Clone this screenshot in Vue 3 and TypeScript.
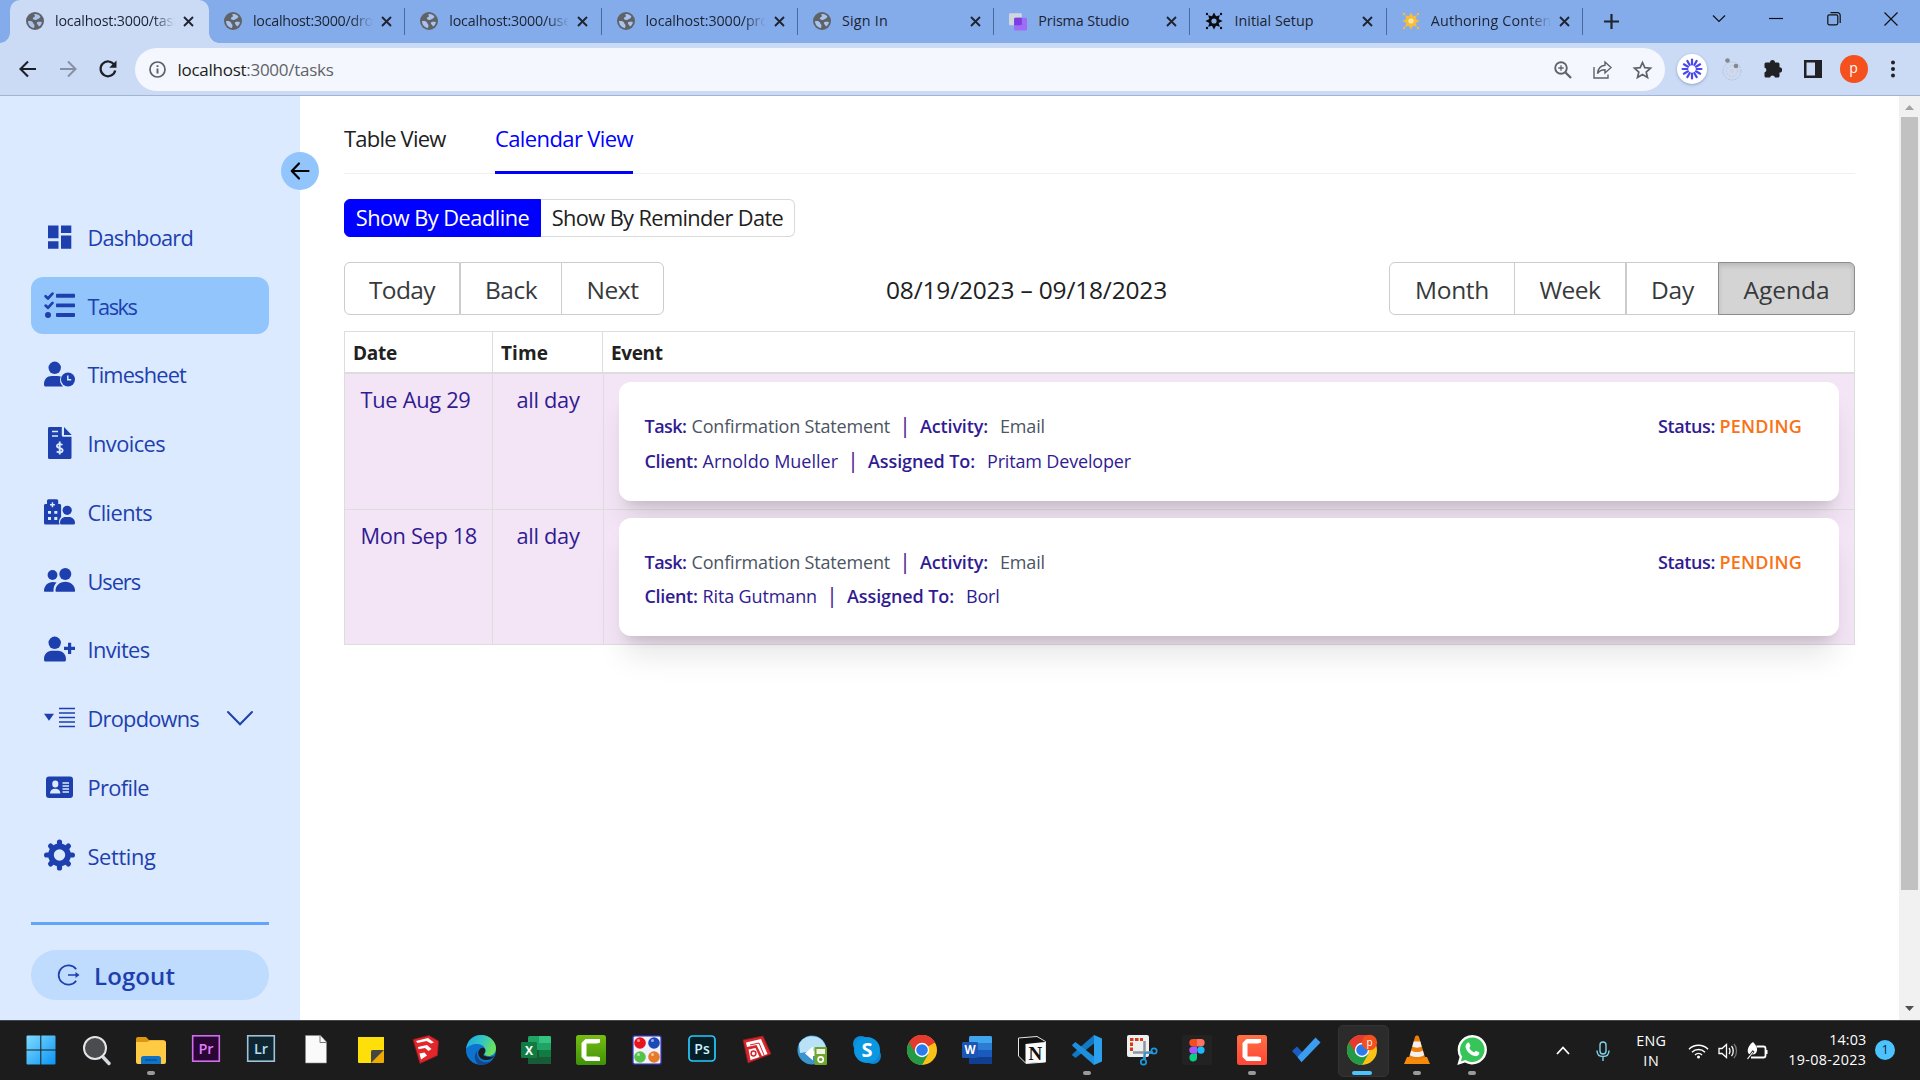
<script setup lang="ts">
// Stretches or tightens a label's tracking so that it occupies a set width.
const vFit = {
  mounted(el: HTMLElement, binding: { value: number }) {
    const count = (el.textContent ?? '').trim().length
    if (!binding.value || !count) return
    const natural = el.getBoundingClientRect().width
    el.style.letterSpacing = `${((binding.value - natural) / count).toFixed(3)}px`
  },
}

interface BrowserTab { title: string; icon: string; w: number; active?: boolean; fade?: boolean; line?: boolean }
const globe = '<svg viewBox="0 0 18 18" width="18" height="18"><circle cx="9" cy="9" r="9" fill="#5f6368"/><path d="M2 9c2.500-.3 5 .2 5.200 2 .1 1.300 1.400 1.200 1.300 2.600-.1 1-.2 1.700-.5 2.400C4.500 15.500 2 12.600 2 9zM8.300 2.100c3.500-.3 5.400 1.300 6.200 2.800-1.200.4-.8 1.700-2 1.900-1.500.3-1.300 1-2.700 1.100C8.200 8 6.500 7.300 6.900 6c.3-1.100 1.900-.7 2-1.800C9 3.300 8.300 3 8.300 2.100zM11 10.500c1-.9 2.800-.6 4.900-.6-.3 1.900-1.400 3.700-2.900 4.700-.3-1.500-2.800-2.700-2-4.100z" fill="#a9c3ee"/></svg>'
const spark = (c: string, d: string) => `<svg viewBox="0 0 20 20" width="20" height="20"><path d="M10 .5l2.300 4.300 4.200-1.300L15.200 7.700 19.500 10l-4.300 2.300 1.300 4.200-4.200-1.300L10 19.500l-2.300-4.300-4.200 1.300 1.300-4.200L.5 10l4.300-2.300L3.500 3.500l4.200 1.300z" fill="${c}"/><circle cx="10" cy="10" r="2.900" fill="${d}"/><g fill="${c}"><circle cx="2.200" cy="2.200" r="1.300"/><circle cx="17.800" cy="2.200" r="1.300"/><circle cx="2.200" cy="17.800" r="1.300"/><circle cx="17.800" cy="17.800" r="1.300"/></g></svg>`
const prisma = '<svg viewBox="0 0 21 21" width="21" height="21"><rect x="0" y="1" width="15" height="14" rx="1.500" fill="#cfd6df"/><rect x="6" y="6" width="15" height="15" rx="1.500" fill="#9f6cf7"/><path d="M6 7.500A1.500 1.500 0 0 1 7.500 6H15v7.500a1.500 1.500 0 0 1-1.500 1.500H6z" fill="#7a3fe0"/></svg>'

const browserTabs: BrowserTab[] = [
  { title: 'localhost:3000/tasks', icon: globe, w: 132, active: true, fade: true },
  { title: 'localhost:3000/dropdowns', icon: globe, w: 171, fade: true, line: true },
  { title: 'localhost:3000/users', icon: globe, w: 134, fade: true, line: true },
  { title: 'localhost:3000/profile', icon: globe, w: 143, fade: true, line: true },
  { title: 'Sign In', icon: globe, w: 46, line: true },
  { title: 'Prisma Studio', icon: prisma, w: 91, line: true },
  { title: 'Initial Setup', icon: spark('#0b0b10', '#85acea'), w: 79, line: true },
  { title: 'Authoring Content', icon: spark('#f6bd3b', '#fbe6a8'), w: 126, fade: true, line: true },
]

const N = '#1e40af'
const nav = [
  { label: 'Dashboard', w: 105.5, icon: '<path d="M4 4.500h10.500v12.700H4zM17 4.500h10.300V12H17zM4 20.200h10.500v7.600H4zM17 14.500h10.300v13.300H17z"/>' },
  { label: 'Tasks', w: 49, active: true, icon: `<g fill="none" stroke="${N}" stroke-width="2.700" stroke-linecap="round" stroke-linejoin="round"><path d="M1.600 7.300l2.300 2.200L8.500 4.600M1.600 16.600l2.300 2.200 4.600-4.900"/></g><circle cx="4" cy="26" r="3"/><rect x="12" y="4.800" width="19" height="3.900" rx=".8"/><rect x="12" y="14.400" width="19" height="3.900" rx=".8"/><rect x="12" y="24" width="19" height="3.900" rx=".8"/>` },
  { label: 'Timesheet', w: 98.5, icon: '<circle cx="10.700" cy="9.800" r="6.200"/><path d="M0 26.200C0 21.500 3 18 7.800 18h5.800c1.200 0 2.200.2 3.200.6a8.800 8.800 0 0 0 2.200 9.900H1.500C.6 28.500 0 27.600 0 26.200z"/><circle cx="24" cy="21.500" r="7"/><path d="M23.800 17.500v4.300h3.400" fill="none" stroke="#dbeafe" stroke-width="1.500"/>' },
  { label: 'Invoices', w: 77.5, icon: '<path d="M5.300 0h12.500v8.300c0 .9.500 1.500 1.400 1.500h8.300v20.700c0 .9-.6 1.500-1.500 1.500H5.400c-.9 0-1.400-.6-1.400-1.500V1.500C4 .6 4.500 0 5.300 0zM20 0l7.700 7.900H20z"/><path d="M8 4.500h6M8 9h6" stroke="#dbeafe" stroke-width="1.700"/><path d="M18.500 17.800c-2.800-1.300-5.600-.9-5.600 1.200 0 2.600 5.800 1.500 5.800 4.300 0 2.200-3.200 2.700-6 1.200M15.700 14.500v13" fill="none" stroke="#dbeafe" stroke-width="1.800"/>' },
  { label: 'Clients', w: 64.5, icon: '<path d="M1.500 8H3V5c0-1 .6-1.700 1.600-1.700h8c1 0 1.600.7 1.600 1.700v3h1.500c.8 0 1.400.6 1.400 1.400V21c-1.300 1.300-2 3-2.100 4.500 0 1 .2 2 .8 2.900H1.500A1.500 1.500 0 0 1 0 26.900V9.500C0 8.600.6 8 1.500 8z"/><path d="M4 15h3v2.800H4zM10.300 15h3v2.800h-3zM4 21h3v3H4zM10.300 21h3v3h-3zM7.700 6.300h1.500v1.700h1.700v1.500H9.200v1.700H7.700V9.500H6V8h1.700z" fill="#dbeafe"/><circle cx="23.200" cy="14.300" r="4.600"/><path d="M16 27c0-3.500 2.300-6 5.500-6H25c3.200 0 6 2.500 6 6 0 .9-.5 1.400-1.200 1.400H17.200C16.500 28.400 16 27.900 16 27z"/>' },
  { label: 'Users', w: 52.5, icon: '<circle cx="8.500" cy="11" r="4.900"/><circle cx="21.300" cy="10" r="6"/><path d="M11.500 26.800c0-5 4-9 9.800-9s9.800 4 9.800 9c0 .6-.4 1-1 1H12.500c-.6 0-1-.4-1-1zM0 26.800c0-5 3.700-8.900 9-8.900 1.300 0 2.500.2 3.600.7-2.300 2-3.300 5-3.100 9.200H1c-.6 0-1-.4-1-1z"/>' },
  { label: 'Invites', w: 62, icon: '<circle cx="10.700" cy="9.800" r="6.200"/><path d="M0 26.200C0 21.500 3 17.800 7.800 17.800h6.400c4.500 0 7.800 3.700 7.800 8.400 0 1.400-.7 2.300-1.600 2.300h-19C.6 28.500 0 27.600 0 26.200zM24 9.800h3.200v4H31v3.100h-3.800v4.200H24v-4.200h-4v-3.100h4z"/>' },
  { label: 'Dropdowns', w: 111.5, chevron: true, icon: `<path d="M0 11.700h10L5 18.700z"/><path d="M15 6.500h16M15 11h16M15 15.500h16M15 20h16M15 24.500h16" stroke="${N}" stroke-width="1.500"/>` },
  { label: 'Profile', w: 61.5, icon: '<rect x="2" y="5.500" width="27" height="21.600" rx="3"/><g fill="#dbeafe"><rect x="8.300" y="9.500" width="6" height="7" rx="2.900"/><path d="M6 22.500c0-3 2-4.800 5.200-4.800s5.200 1.800 5.200 4.800z"/></g><path d="M18.500 12H25M18.500 15h6.500M18.500 18H25M18.500 21H25" stroke="#dbeafe" stroke-width="1.400"/>' },
  { label: 'Setting', w: 68, icon: `<g stroke="${N}" stroke-width="5.200" stroke-linecap="round"><path d="M15.500 3.100v25.800M2.600 16h25.800M6.600 7.100l17.800 17.800M24.400 7.100L6.600 24.900"/></g><circle cx="15.500" cy="16" r="11.400"/><circle cx="15.500" cy="16" r="5.700" fill="#dbeafe"/>` },
]

const nudge = [
  { label: 'Today', w: 66 },
  { label: 'Back', w: 52 },
  { label: 'Next', w: 52 },
]
const views = [
  { label: 'Month', w: 74 },
  { label: 'Week', w: 61 },
  { label: 'Day', w: 43 },
  { label: 'Agenda', w: 86, active: true },
]

const rows = [
  { date: 'Tue Aug 29', dw: 110, client: 'Arnoldo Mueller', cw: 135.5, user: 'Pritam Developer', uw: 144 },
  { date: 'Mon Sep 18', dw: 116.5, client: 'Rita Gutmann', cw: 114.5, user: 'Borl', uw: 33.5 },
]

const chrome = '<circle cx="15" cy="15" r="15" fill="#fbc116"/><path d="M15 15L2 7.500A15 15 0 0 1 28 7.500z" fill="#e33b2e"/><path d="M2 7.500A15 15 0 0 0 15 30l6.500-11.200L15 15z" fill="#229a46"/><path d="M15 8h13.200A15 15 0 0 0 2 7.500L8.700 18z" fill="#e33b2e"/><circle cx="15" cy="15" r="7.200" fill="#fff"/><circle cx="15" cy="15" r="5.800" fill="#2a7bee"/>'
const letter = (t: string, x: number, y: number, s: number, c: string, w = 600) =>
  `<text x="${x}" y="${y}" font-family="Open Sans, Noto Sans, sans-serif" font-size="${s}" font-weight="${w}" fill="${c}" text-anchor="middle">${t}</text>`
const camtasia = (a: string, b: string, id: string) =>
  `<defs><linearGradient id="${id}" x1="0" y1="0" x2="0" y2="1"><stop stop-color="${a}"/><stop offset="1" stop-color="${b}"/></linearGradient></defs><rect width="30" height="30" rx="2.500" fill="url(#${id})"/><path d="M24 4v3.500l-3 1H10.500v13H21l3 1V26H9.500L5.500 22V8l4-4z" fill="#fff"/>`

const apps: { name: string; art: string; run?: boolean; active?: boolean }[] = [
  { name: 'start', art: '<defs><linearGradient id="w" x1="0" y1="0" x2="1" y2="1"><stop stop-color="#7fdcff"/><stop offset="1" stop-color="#0a94f4"/></linearGradient></defs><path d="M.5 1.500A1 1 0 0 1 1.500.5h12.800v14H.5zM15.300.5h13.200a1 1 0 0 1 1 1v13H15.300zM.5 15.500h13.800v14H1.500a1 1 0 0 1-1-1zM15.300 15.500h14.200v13a1 1 0 0 1-1 1H15.300z" fill="url(#w)"/>' },
  { name: 'search', art: '<path d="M21.500 21.500l6.500 7" stroke="#d5d8dc" stroke-width="3.400" stroke-linecap="round"/><circle cx="14" cy="13" r="11" fill="#4a4c4f" stroke="#e3e6e9" stroke-width="2"/>' },
  { name: 'files', run: true, art: '<path d="M0 4a2 2 0 0 1 2-2h8l3 3h14a2 2 0 0 1 2 2v5H0z" fill="#dc9710"/><path d="M0 7h11l3-1.500h14a2 2 0 0 1 2 2V27a2 2 0 0 1-2 2H2a2 2 0 0 1-2-2z" fill="#ffcb45"/><path d="M5 29v-5.500a2.500 2.500 0 0 1 2.500-2.500h15a2.500 2.500 0 0 1 2.500 2.500V29z" fill="#1173c7"/><path d="M9 25h12" stroke="#0a4a8a" stroke-width="1.200"/>' },
  { name: 'premiere', art: '<rect x="1.700" y=".8" width="26.600" height="25.400" fill="#2a0634" stroke="#d36cf0" stroke-width="1.600"/>' + letter('Pr', 15, 18.5, 14.5, '#e07bff') },
  { name: 'lightroom', art: '<rect x="1.700" y=".8" width="26.600" height="25.400" fill="#0f2631" stroke="#9fc4d8" stroke-width="1.600"/>' + letter('Lr', 15, 18.5, 14.5, '#b4dcf2') },
  { name: 'document', art: '<path d="M4.500.5h15l6 6.500V28h-21z" fill="#fafafa" stroke="#8c8c8c" stroke-width=".6"/><path d="M19 .8V7.500h6.300" fill="none" stroke="#777" stroke-width="1"/>' },
  { name: 'notes', art: '<path d="M2 2h26v14L18 28H3a1 1 0 0 1-1-1z" fill="#ffdf0a"/><path d="M15 28l13-13v12a1 1 0 0 1-1 1z" fill="#f0ab00"/><path d="M15 28V16.500a1.500 1.500 0 0 1 1.500-1.500H28z" fill="#454545"/>' },
  { name: 'sketchup', art: '<path d="M2 4.500L18 .5l9.500 5.500-1 14.500L9 28.500z" fill="#e3262b" stroke="#8d1b1f" stroke-width=".8"/><path d="M5 6l12-3 6 4.500-3 1-4.500-2.500-9 2zM7 12l9-2 4.500 4-3 2-3.500-3-6.500 1.200zM8.500 18.500l5-1 2.500 3-6 4z" fill="#fff"/>' },
  { name: 'edge', art: '<defs><linearGradient id="ed" x1="0" y1="0" x2="1" y2=".3"><stop stop-color="#1ba8e8"/><stop offset=".6" stop-color="#35c7c0"/><stop offset="1" stop-color="#6be05c"/></linearGradient></defs><circle cx="15" cy="15" r="15" fill="#0c73cf"/><path d="M.2 14C1 5.500 7.200 0 15 0c8.500 0 15 6.300 15 13 0 5.500-3.600 8-7.700 8-3.300 0-4.500-1.600-3.700-2.800.8-1 1.100-2.200.7-3.700C18.500 11.300 15.600 9 11 9 6.300 9 1.800 11 .2 14z" fill="url(#ed)"/><path d="M11.500 15.500c-2.500 7 3.500 12.500 9.500 11.700 2.400-.3 4.600-1 6-2.900A15 15 0 0 1 15 30C9 29.500 6.500 20 11.500 15.500z" fill="#14478f"/><path d="M18.700 21.100c-2-.6-1.200-2-.2-2.900.8-1 1.100-2.200.7-3.700-.7-2.300-4-2.200-5.800.2-3 4 .3 9.800 5.600 10.200 4 .3 7-1 9.700-3.900-3 1.300-6.500 1.200-10 .1z" fill="#1c1c1c"/>' },
  { name: 'excel', art: '<rect x="7" y="1" width="23" height="28" rx="1.500" fill="#21a366"/><path d="M18 1h10.500A1.500 1.500 0 0 1 30 2.500V8H18z" fill="#33c481"/><path d="M7 15h11v7H7z" fill="#185c37"/><path d="M18 15h12v7H18z" fill="#107c41"/><path d="M7 22h23v5.500a1.500 1.500 0 0 1-1.500 1.500h-20A1.500 1.500 0 0 1 7 27.500z" fill="#185c37"/><rect x="0" y="7" width="16" height="16" rx="1.300" fill="#107c41"/>' + letter('X', 8, 19.5, 12, '#fff', 700) },
  { name: 'camtasia', art: camtasia('#77bd12', '#3f9308', 'cg') },
  { name: 'beads', art: '<rect x=".8" y=".8" width="28.400" height="28.400" rx="2" fill="#f1f1fb" stroke="#2a2a9c" stroke-width="1.500"/><circle cx="8" cy="8" r="5.800" fill="#e8141c"/><circle cx="22" cy="8" r="5.800" fill="#1c49b8"/><circle cx="8" cy="22" r="5.800" fill="#55c34a"/><circle cx="22" cy="22" r="5.800" fill="#e77a28"/><g fill="#fff" opacity=".55"><circle cx="6.500" cy="5.500" r="1.500"/><circle cx="20.500" cy="5.500" r="1.500"/><circle cx="6.500" cy="19.500" r="1.500"/><circle cx="20.500" cy="19.500" r="1.500"/></g>' },
  { name: 'photoshop', art: '<rect x="2" y="1" width="26" height="25" rx="3.500" fill="#061e26" stroke="#26c9ff" stroke-width="1.700"/>' + letter('Ps', 15, 18.5, 14, '#c9f1ff') },
  { name: 'layout', art: '<path d="M1 5L21 1l8 18L6 28z" fill="#d7262c" stroke="#8a1a1d" stroke-width=".8"/><path d="M4 7.500L19 4l6.500 15L20 21l-5.500-11L5 12z" fill="#fff"/><path d="M6.500 14.500l7-1.500 4 9-9 3z" fill="#fff"/><circle cx="11.500" cy="18.500" r="2.400" fill="none" stroke="#d7262c" stroke-width="1.500"/><path d="M8 10l9-2 5 12" fill="none" stroke="#d7262c" stroke-width="1"/>' },
  { name: 'downloads', art: '<circle cx="15" cy="15" r="14.500" fill="#3a95cf"/><path d="M2 9C6 1 16-1 23 3.500c3 2 5.500 6 6 9.500L18 16 3 18z" fill="#b9e2f6"/><path d="M8 18.500l8-7V16h5v5h-5v4.500z" fill="#fff"/><rect x="17.500" y="12" width="12.500" height="18" rx="1" fill="#6fa62f"/><rect x="19.500" y="14" width="8.500" height="5" fill="#eef5e2"/><circle cx="23.700" cy="24.500" r="2.600" fill="none" stroke="#fff" stroke-width="1.700"/>' },
  { name: 'skype', art: '<circle cx="9" cy="9" r="8" fill="#0a8fd8"/><circle cx="21" cy="21" r="8" fill="#0a86d8"/><circle cx="15" cy="15" r="13" fill="#0c97e2"/>' + letter('S', 15, 22, 20, '#fff', 700) },
  { name: 'chrome', art: chrome },
  { name: 'word', art: '<rect x="7" y="1" width="23" height="28" rx="1.500" fill="#185abd"/><path d="M8.500 1h20A1.500 1.500 0 0 1 30 2.500V8H7V2.500A1.500 1.500 0 0 1 8.500 1z" fill="#41a5ee"/><path d="M7 8h23v7H7z" fill="#2b7cd3"/><path d="M7 22h23v5.500a1.500 1.500 0 0 1-1.500 1.500h-20A1.500 1.500 0 0 1 7 27.500z" fill="#103f91"/><rect x="0" y="7" width="16" height="16" rx="1.300" fill="#1b55b5"/>' + letter('W', 8, 19.2, 11.5, '#fff', 700) },
  { name: 'notion', art: '<path d="M1.500 3L20 1.500 28.500 6.500V27L9 28.500 1.500 21z" fill="#111" stroke="#e5e5e5" stroke-width="1"/><path d="M8.500 9L28 7v20L8.500 28.200z" fill="#fafafa"/>' + '<text x="18.300" y="24.500" font-family="Liberation Serif, serif" font-size="19" font-weight="700" fill="#111" text-anchor="middle">N</text>' },
  { name: 'vscode', run: true, art: '<path d="M22 0l8 3.500v23L22 30z" fill="#2ba0ee"/><path d="M22 8.500L3.500 23 .5 20.500a1 1 0 0 1 0-1.400L22 0z" fill="#1179c3"/><path d="M22 21.500L3.500 7 .5 9.500a1 1 0 0 0 0 1.400L22 30z" fill="#1f8fdd"/>' },
  { name: 'snip', art: '<rect x="0" y="0" width="22" height="22" rx="2" fill="#eeeff1"/><path d="M4.500 16V4.500H16" fill="none" stroke="#d63b12" stroke-width="3" stroke-dasharray="3.500 1.500"/><path d="M17.500 6v18M6 17.500h20" stroke="#8f959b" stroke-width="2.500"/><circle cx="27" cy="16" r="2.700" fill="none" stroke="#1b98e0" stroke-width="1.700"/><circle cx="16.500" cy="27" r="2.700" fill="none" stroke="#1b98e0" stroke-width="1.700"/><path d="M24.500 17.500L18 18l-1 6.500" fill="none" stroke="#1b98e0" stroke-width="1.700"/>' },
  { name: 'figma', art: '<rect width="30" height="30" rx="2" fill="#222"/><path d="M11 4h4v7.400h-4a3.700 3.700 0 0 1 0-7.400z" fill="#f24e1e"/><path d="M15 4h4a3.700 3.700 0 0 1 0 7.400h-4z" fill="#ff7262"/><path d="M11 11.400h4v7.400h-4a3.700 3.700 0 0 1 0-7.400z" fill="#a259ff"/><circle cx="18.900" cy="15.100" r="3.700" fill="#1abcfe"/><path d="M11 18.800h4v3.700a3.800 3.800 0 1 1-4-3.700z" fill="#0acf83"/>' },
  { name: 'recorder', run: true, art: camtasia('#ff7043', '#ff4536', 'cr') },
  { name: 'todo', art: '<path d="M0 16l5-4.500 8.500 9L9.500 26.500z" fill="#1a5dbe"/><path d="M9.500 27.200L5.500 22 23.500 2.500l5 5z" fill="#3b9df0"/>' },
  { name: 'chrome-profile', run: true, active: true, art: chrome + '<circle cx="22.500" cy="7.500" r="7.700" fill="#f4511e"/>' + letter('p', 22.5, 10.5, 10, '#fff', 400) },
  { name: 'player', run: true, art: '<path d="M5 22h20l3 7H2z" fill="#f58a0b"/><path d="M15 .5c1 0 1.800.5 2 1.500L23 22c-2 3.500-14 3.500-16 0L13 2c.2-1 1-1.500 2-1.500z" fill="#f07d0a"/><path d="M11.700 6.500h6.600l1.400 5c-2 1.500-7.300 1.500-9.400 0zM9.300 15.500c3 2 8.500 2 11.500 0l1.300 4.500c-3 2.700-11.200 2.700-14.200 0z" fill="#f1f1f1"/>' },
  { name: 'chat', run: true, art: '<path d="M15.300 0A14.700 14.700 0 1 1 8 27.500L.3 30l2.300-8A14.700 14.700 0 0 1 15.300 0z" fill="#fff"/><path d="M15.400 2.400A12.300 12.300 0 1 1 8.500 25l-4.800 1.500 1.500-4.800A12.300 12.300 0 0 1 15.400 2.400z" fill="#35c559"/><path d="M10.500 8c.7-.6 1.500-.5 1.900.3l1 2.400c.3.800-1.100 1.700-1 2.200.9 2 2.500 3.500 4.700 4.400.6.200 1.400-1.700 2.100-1.400l2.500 1.200c.8.400.7 1 .4 1.900-.6 1.600-2.600 2.500-4.500 2-4.600-1-8-4.500-9-8.700-.3-1.700.5-3.300 1.900-4.300z" fill="#fff"/>' },
]
</script>

<template>
  <div class="screen">
    <header class="browser">
      <div class="strip">
        <div v-for="t in browserTabs" :key="t.title" class="btab" :class="{ on: t.active, line: t.line }">
          <span class="fav" v-html="t.icon"></span>
          <span class="ttl" :class="{ fade: t.fade }"><span v-fit="t.w" class="tx">{{ t.title }}</span></span>
          <svg class="x" width="11" height="11" viewBox="0 0 11 11"><path d="M1 1l9 9M10 1l-9 9" stroke="#1f2430" stroke-width="1.900" /></svg>
        </div>
        <svg class="plus" width="15" height="15" viewBox="0 0 15 15"><path d="M7.500 0v15M0 7.500h15" stroke="#1f2430" stroke-width="2.200" /></svg>
        <div class="win">
          <svg viewBox="0 0 14 14"><path d="M1 3.500l6 6 6-6" /></svg>
          <svg viewBox="0 0 14 14"><path d="M0 6.500h14" /></svg>
          <svg viewBox="0 0 14 14"><rect x=".8" y="2.800" width="10" height="10" rx="1.500" /><path d="M3.500.7h7a2.700 2.700 0 0 1 2.700 2.700v7.500" /></svg>
          <svg viewBox="0 0 14 14"><path d="M.5.5l13 13M13.500.5l-13 13" /></svg>
        </div>
      </div>
      <div class="bar">
        <svg width="18" height="18" viewBox="0 0 18 18" class="i1"><path d="M17 9H2M9 1.500L1.500 9 9 16.500" fill="none" stroke="#1c1f24" stroke-width="2.100" /></svg>
        <svg width="18" height="18" viewBox="0 0 18 18" class="i2"><path d="M1 9h15M9 1.500L16.500 9 9 16.500" fill="none" stroke="#8790a0" stroke-width="2" /></svg>
        <svg width="18" height="18" viewBox="0 0 18 18" class="i3"><path d="M15.300 5A7.400 7.400 0 1 0 16.200 10.500" fill="none" stroke="#1c1f24" stroke-width="2.200" /><path d="M17.500.5v7.300h-7.300z" fill="#1c1f24" /></svg>
        <div class="omni">
          <svg width="17" height="17" viewBox="0 0 17 17"><circle cx="8.500" cy="8.500" r="7.500" fill="none" stroke="#5b6067" stroke-width="1.700" /><path d="M8.500 7.500v5M8.500 4.200v1.900" stroke="#5b6067" stroke-width="1.900" /></svg>
          <span v-fit="156" class="tx url"><b>localhost</b>:3000/tasks</span>
          <svg class="zoomer" width="18" height="18" viewBox="0 0 18 18" fill="none" stroke="#5f6368" stroke-width="1.900"><circle cx="7" cy="7" r="5.800" /><path d="M11.500 11.500L17 17" stroke-width="2.300" /><path d="M7 4.300v5.400M4.300 7h5.400" stroke-width="1.300" /></svg>
          <svg width="19" height="18" viewBox="0 0 19 18" fill="none" stroke="#5f6368" stroke-width="1.400"><path d="M1 6v11h14v-3.500" /><path d="M12 1l6 5.500-6 5.500V8.800c-3 0-5.500.8-7.500 3.700C5 8 7.500 4.700 12 4.300z" /></svg>
          <svg width="19" height="18" viewBox="0 0 19 18" fill="none" stroke="#5f6368" stroke-width="1.700"><path d="M9.500 1.500l2.300 5.200 5.700.5-4.300 3.800 1.300 5.500-5-2.900-5 2.900 1.300-5.500L1.500 7.200l5.700-.5z" /></svg>
        </div>
        <div class="ext">
          <span class="round"><svg width="22" height="22" viewBox="-11 -11 22 22"><g stroke="#4a48ec" stroke-width="2.200" stroke-linecap="round"><path v-for="k in 12" :key="k" d="M0 -4.600V-9.400" :transform="`rotate(${k * 30})`" /></g></svg></span>
          <svg class="e2" width="22" height="22" viewBox="0 0 22 22"><circle cx="11" cy="13" r="9" fill="none" stroke="#b9c0cb" stroke-dasharray="2 1.200" /><circle cx="11" cy="13" r="5.500" fill="none" stroke="#cdc6c8" stroke-dasharray="2 1.200" /><circle cx="11" cy="13" r="2" fill="#dccfc8" /><circle cx="6.500" cy="2.500" r="2.300" fill="#83878e" /><circle cx="15" cy="8" r="2.300" fill="#83878e" /></svg>
          <svg class="e3" width="20" height="20" viewBox="0 0 20 20"><path d="M7 3.500a2.500 2.500 0 0 1 5 0h3A1.500 1.500 0 0 1 16.500 5v3.300a2.600 2.600 0 0 1 0 5.200V17a1.500 1.500 0 0 1-1.500 1.500h-3a2.600 2.600 0 0 0-5 0H3A1.500 1.500 0 0 1 1.500 17v-3.500a2.600 2.600 0 0 0 0-5V5A1.500 1.500 0 0 1 3 3.500z" fill="#202124" /></svg>
          <svg class="e4" width="20" height="20" viewBox="0 0 20 20"><path d="M1 1h18v18H1zM3.500 3.500v13H12v-13z" fill="#202124" fill-rule="evenodd" /></svg>
          <span class="avatar">p</span>
          <svg class="e6" width="20" height="20" viewBox="0 0 20 20" fill="#202124"><circle cx="10" cy="3.500" r="2" /><circle cx="10" cy="10" r="2" /><circle cx="10" cy="16.500" r="2" /></svg>
        </div>
      </div>
    </header>

    <div class="page">
      <aside class="side">
        <button class="collapse" aria-label="Collapse"><svg width="20" height="18" viewBox="0 0 20 18"><path d="M18.500 9H2M9 1.500L1.800 9 9 16.500" fill="none" stroke="#000" stroke-width="2.200" stroke-linecap="round" stroke-linejoin="round" /></svg></button>
        <nav>
          <a v-for="n in nav" :key="n.label" class="item" :class="{ on: n.active }">
            <svg class="ic" width="31" height="32" viewBox="0 0 31 32" fill="#1e40af" v-html="n.icon"></svg>
            <span v-fit="n.w" class="tx">{{ n.label }}</span>
            <svg v-if="n.chevron" class="chev" width="26" height="15" viewBox="0 0 26 15"><path d="M1 1l12 12.300L25 1" fill="none" stroke="#1e40af" stroke-width="2" stroke-linecap="round" /></svg>
          </a>
        </nav>
        <hr />
        <a class="logout">
          <svg width="22" height="22" viewBox="0 0 22 22"><path d="M18.200 5.300A9.700 9.700 0 1 0 18.200 16.700M10 11h8" fill="none" stroke="#1e40af" stroke-width="1.700" /><path d="M17.500 8l4 3-4 3z" fill="#1e40af" /></svg>
          <span v-fit="81" class="tx">Logout</span>
        </a>
      </aside>

      <main class="main">
        <div class="tabs">
          <a class="tab"><span v-fit="101.500" class="tx">Table View</span></a>
          <a class="tab on"><span v-fit="138" class="tx">Calendar View</span></a>
        </div>
        <div class="seg">
          <span class="opt on"><span v-fit="173.500" class="tx">Show By Deadline</span></span>
          <span class="opt"><span v-fit="231.500" class="tx">Show By Reminder Date</span></span>
        </div>
        <div class="tools">
          <div class="group left">
            <button v-for="b in nudge" :key="b.label"><span v-fit="b.w" class="tx">{{ b.label }}</span></button>
          </div>
          <div class="range"><span v-fit="281" class="tx">08/19/2023 – 09/18/2023</span></div>
          <div class="group right">
            <button v-for="v in views" :key="v.label" :class="{ on: v.active }"><span v-fit="v.w" class="tx">{{ v.label }}</span></button>
          </div>
        </div>
        <div class="agenda">
          <div class="head">
            <div class="c1"><span v-fit="44" class="tx">Date</span></div>
            <div class="c2"><span v-fit="47" class="tx">Time</span></div>
            <div class="c3"><span v-fit="51.500" class="tx">Event</span></div>
          </div>
          <div v-for="r in rows" :key="r.date" class="row">
            <div class="c1"><span v-fit="r.dw" class="tx">{{ r.date }}</span></div>
            <div class="c2"><span v-fit="63" class="tx">all day</span></div>
            <div class="c3">
              <article class="card">
                <div>
                  <p>
                    <b v-fit="42" class="tx">Task:</b><span v-fit="198.500" class="tx gray g1">Confirmation Statement</span>
                    <i>|</i><b v-fit="68" class="tx">Activity:</b><span v-fit="45" class="tx gray g2">Email</span>
                  </p>
                  <p>
                    <b v-fit="53" class="tx">Client:</b><span v-fit="r.cw" class="tx g1">{{ r.client }}</span>
                    <i>|</i><b v-fit="107" class="tx">Assigned To:</b><span v-fit="r.uw" class="tx g2">{{ r.user }}</span>
                  </p>
                </div>
                <p><b v-fit="57" class="tx">Status:</b><span v-fit="82.500" class="tx pend">PENDING</span></p>
              </article>
            </div>
          </div>
        </div>
      </main>

      <div class="scroll">
        <svg width="11" height="21" viewBox="0 0 11 21"><path d="M1 14h9L5.500 9z" fill="#a3a3a3" /></svg>
        <div class="thumb"></div>
        <svg width="11" height="21" viewBox="0 0 11 21"><path d="M1 7h9l-4.500 5z" fill="#505050" /></svg>
      </div>
    </div>

    <footer class="task">
      <div class="apps">
        <div v-for="a in apps" :key="a.name" class="app" :class="{ run: a.run, active: a.active }">
          <svg width="30" height="30" viewBox="0 0 30 30" v-html="a.art"></svg>
        </div>
      </div>
      <div class="tray">
        <svg class="t1" width="14" height="9" viewBox="0 0 14 9"><path d="M1 8l6-6.500L13 8" fill="none" stroke="#fff" stroke-width="1.800" /></svg>
        <svg class="t2" width="14" height="20" viewBox="0 0 14 20" fill="none" stroke="#7fd0ea" stroke-width="1.400"><rect x="4" y="1" width="6" height="12" rx="3" /><path d="M1 9.500c0 4 2.500 6 6 6s6-2 6-6M7 15.500V20" /></svg>
        <div class="lang"><span v-fit="30" class="tx">ENG</span><span v-fit="16" class="tx">IN</span></div>
        <svg class="t3" width="21" height="16" viewBox="0 0 21 16" fill="none" stroke="#fff" stroke-width="1.500"><path d="M1 6.200a13.500 13.500 0 0 1 19 0M4 9.200a9.200 9.200 0 0 1 13 0M7 12a5 5 0 0 1 7 0" /><circle cx="10.500" cy="14" r="1.500" fill="#fff" stroke="none" /></svg>
        <svg class="t4" width="20" height="18" viewBox="0 0 20 18" fill="none" stroke="#fff" stroke-width="1.300"><path d="M1 6.500h3l4.500-4v13L4 11.500H1zM11 6c1.300 1.500 1.300 4.500 0 6M13.500 4c2.300 2.500 2.300 7.500 0 10" /><path d="M16 2c3.300 3.500 3.300 10.500 0 14" stroke="#777" /></svg>
        <svg class="t5" width="21" height="18" viewBox="0 0 21 18"><path d="M9.500 4.500h7a2 2 0 0 1 2 2v7a2 2 0 0 1-2 2H4" fill="none" stroke="#fff" stroke-width="1.800" /><path d="M18.500 8h2v4h-2z" fill="#fff" /><path d="M6 0c4 4 5.500 8 2.500 11.500C7 13 3 13 1.500 11.500-.5 8 1.500 3.500 6 0z" fill="#fff" /><path d="M1 16.500l5.500-7.500" stroke="#1c1c1c" stroke-width="2.400" /><path d="M.5 17l5.500-7" stroke="#fff" stroke-width="1.200" /></svg>
        <div class="clock"><span v-fit="37" class="tx">14:03</span><span v-fit="78" class="tx">19-08-2023</span></div>
        <span class="badge">1</span>
      </div>
    </footer>
  </div>
</template>

<style>
body { margin: 0; overflow: hidden; }
</style>

<style scoped>
* { box-sizing: border-box; }
.screen { width: 1920px; height: 1080px; display: flex; flex-direction: column; overflow: hidden; background: #fff; font-family: "Open Sans", "Noto Sans", sans-serif; color: #212121; }
svg { display: block; flex: none; overflow: visible; }
.tx { display: inline-block; white-space: nowrap; flex: none; }
p { margin: 0; }

/* browser */
.browser { height: 96px; flex: none; background: #cbdbf6; border-bottom: 1px solid #a3b4d0; }
.strip { height: 43px; background: #85acea; display: flex; padding-left: 10px; }
.btab { position: relative; width: 196.300px; height: 43px; display: flex; align-items: center; padding-left: 18.500px; flex: none; }
.btab.on { width: 199px; padding-left: 16px; background: #cbdbf6; border-radius: 10px 10px 0 0; }
.btab.on::before, .btab.on::after { content: ""; position: absolute; bottom: 0; width: 10px; height: 10px; }
.btab.on::before { left: -10px; background: radial-gradient(circle at 0 0, transparent 9.500px, #cbdbf6 10px); }
.btab.on::after { right: -10px; background: radial-gradient(circle at 100% 0, transparent 9.500px, #cbdbf6 10px); }
.btab.line { border-right: 1px solid #4a699f; border-image: linear-gradient(transparent 21%, #4a699f 21%, #4a699f 79%, transparent 79%) 1; border-width: 0 1px 0 0; }
.btab + .btab { padding-left: 15px; }
.fav { width: 18px; height: 18px; display: flex; align-items: center; justify-content: center; margin-right: 11px; margin-top: -1px; }
.ttl { width: 120px; overflow: hidden; font-size: 14.300px; line-height: 22px; color: #1b2334; margin-top: -1px; }
.ttl.fade { mask-image: linear-gradient(90deg, #000 82%, transparent 100%); }
.x { margin-left: 8px; }
.plus { margin: 13.500px 0 0 20.500px; }
.win { margin-left: auto; display: flex; padding: 12px 22px 0 0; gap: 43.300px; }
.win svg { width: 14px; height: 14px; fill: none; stroke: #111; stroke-width: 1.200; }
.bar { height: 52px; display: flex; align-items: center; }
.i1 { margin-left: 18.500px; }
.i2 { margin-left: 22px; }
.i3 { margin-left: 22px; }
.omni { margin-left: 18px; width: 1530px; height: 43px; margin-top: 1px; border-radius: 22px; background: #f4f7fd; display: flex; align-items: center; padding: 0 13px 0 14px; gap: 21px; }
.url { font-size: 17px; line-height: 24px; color: #5f6368; margin-left: -9px; }
.url b { font-weight: 400; color: #1b1d21; }
.zoomer { margin-left: auto; }
.ext { display: flex; align-items: center; margin-left: 12.500px; margin-top: -1px; }
.round { width: 30px; height: 30px; border-radius: 50%; background: #fff; display: flex; align-items: center; justify-content: center; box-shadow: 0 1px 3px rgba(60, 80, 120, .4); }
.e2 { margin-left: 14px; }
.e3 { margin-left: 19.500px; }
.e4 { margin-left: 20px; }
.avatar { width: 28px; height: 28px; border-radius: 50%; background: #f4511e; color: #fff; font-size: 14px; line-height: 25px; text-align: center; margin-left: 17px; }
.e6 { margin-left: 15px; }

/* page */
.page { height: 924px; flex: none; display: flex; }
.side { position: relative; width: 300px; background: #dbeafe; padding: 112px 31px 0; color: #1e40af; }
.collapse { position: absolute; left: 281px; top: 56px; width: 38px; height: 38px; padding: 0; border: 0; border-radius: 50%; background: #93c5fd; display: flex; align-items: center; justify-content: center; }
nav { display: flex; flex-direction: column; gap: 11.770px; }
.item { height: 57px; border-radius: 12px; display: flex; align-items: center; padding-left: 13px; font-size: 21.800px; line-height: 30px; }
.item.on { background: #93c5fd; }
.item .tx { margin: 2.500px 0 0 12.500px; }
.chev { margin: 1px 0 0 28px; }
hr { margin: 38px 0 0; border: 0; height: 3px; background: #60a5fa; }
.logout { margin-top: 25px; height: 50px; border-radius: 25px; background: #bfdbfe; display: flex; align-items: center; padding-left: 27px; font-size: 24px; font-weight: 600; }
.logout .tx { margin-left: 14px; margin-top: 1px; }

.main { width: 1599px; padding: 0 44px; }
.tabs { height: 78px; display: flex; gap: 49.500px; border-bottom: 1px solid #f0f0f0; font-size: 22px; }
.tab { height: 78px; padding-top: 25px; line-height: 35px; }
.tab.on { color: #00f; border-bottom: 3px solid #00f; }
.seg { margin-top: 25px; display: inline-flex; height: 38px; font-size: 21.800px; line-height: 36px; border-radius: 6px; }
.opt { border: 1px solid #d9d9d9; border-left: 0; border-radius: 0 6px 6px 0; width: 254px; text-align: center; }
.opt.on { width: 197px; background: #00f; color: #fff; border: 1px solid #00f; border-radius: 6px 0 0 6px; }
.tools { margin-top: 25px; height: 53px; display: flex; justify-content: space-between; font-size: 24.500px; }
.group { display: flex; }
.group button { height: 53px; padding: 1px 0 0; border: 1px solid #ccc; background: #fff; color: #373a3c; font: inherit; line-height: 49px; margin: 0; }
.left button:nth-child(1) { width: 116px; border-radius: 6px 0 0 6px; }
.left button:nth-child(2) { width: 102px; }
.left button:nth-child(3) { width: 103px; margin-left: -1px; border-radius: 0 6px 6px 0; }
.right button:nth-child(1) { width: 126px; border-radius: 6px 0 0 6px; }
.right button:nth-child(2) { width: 112px; margin-left: -1px; }
.right button:nth-child(3) { width: 93px; }
.right button:nth-child(4) { width: 137px; margin-left: -1px; border-radius: 0 6px 6px 0; }
.group button.on { background: #d4d4d4; border-color: #8c8c8c; box-shadow: inset 0 3px 5px rgba(0, 0, 0, .125); }
.range { line-height: 56px; margin-left: 75px; margin-right: 75px; flex: 1; text-align: center; }
.agenda { position: relative; z-index: 0; margin-top: 16px; border: 1px solid #ddd; }
.head { display: flex; height: 42px; border-bottom: 2px solid #ddd; font-size: 19px; font-weight: 700; line-height: 43px; background: #fff; }
.head > div, .row > div { border-right: 1px solid #ddd; }
.head > div { padding-left: 8px; }
.c1 { width: 148px; }
.head .c2 { width: 110px; }
.row .c2 { width: 111px; }
.head .c3, .row .c3 { flex: 1; border-right: 0; }
.row { display: flex; height: 136px; border-bottom: 1px solid #ddd; color: #311b92; font-size: 21.800px; line-height: 30px; background: #f3e5f5; }
.row + .row { height: 134px; border-bottom: 0; background: none; position: relative; }
.row + .row::before { content: ""; position: absolute; inset: 0; background: #f3e5f5; z-index: -1; }
.row .c1 { padding: 10.500px 0 0 15.500px; }
.row .c2 { padding: 10.500px 0 0 23.500px; }
.row .c3 { padding: 8px 15px 0; }
.card { height: 119px; border-radius: 12px; background: #fff; padding: 26.500px 37px 0 25.500px; display: flex; justify-content: space-between; font-size: 18px; line-height: 35px; box-shadow: 0 25px 31px -6px rgba(0, 0, 0, .1), 0 10px 12px -7px rgba(0, 0, 0, .12); }
.row + .row .card { height: 118px; line-height: 34.500px; }
.card p { display: flex; align-items: center; height: 35px; }
.row + .row .card p { height: 34.500px; }
.card b { font-weight: 600; }
.card i { font-style: normal; font-size: 21px; width: 30px; text-align: center; line-height: 30px; margin-top: -2px; color: #4a148c; }
.gray { color: #4b5563; }
.g1 { margin-left: 5px; }
.g2 { margin-left: 12px; }
.pend { color: #f97316; font-weight: 600; margin-left: 4.500px; }

.scroll { width: 21px; background: #f1f1f1; display: flex; flex-direction: column; align-items: center; }
.thumb { width: 17px; height: 773px; background: #c1c1c1; margin-bottom: auto; }

/* taskbar */
.task { height: 60px; flex: none; background: #1c1c1c; border-top: 1px solid #43484b; display: flex; color: #fff; }
.apps { display: flex; padding-left: 13.500px; }
.app { position: relative; width: 55.060px; height: 59px; display: flex; justify-content: center; padding-top: 14px; }
.app svg { position: relative; }
.app.run::after { content: ""; position: absolute; left: 50%; margin-left: -4px; top: 50px; width: 8px; height: 4px; border-radius: 2px; background: #9a9a9a; }
.app.active::before { content: ""; position: absolute; left: 3px; top: 4px; width: 49px; height: 50px; border-radius: 5px; background: #2b2b2b; border: 1px solid #333; }
.app.active::after { width: 20px; margin-left: -10px; background: #4cc2ff; }
.tray { flex: 1; display: flex; align-items: center; font-size: 14.300px; line-height: 19.500px; }
.t1 { margin-left: 56.500px; }
.t2 { margin-left: 26px; }
.lang { display: flex; flex-direction: column; align-items: center; margin-left: 26px; }
.t3 { margin-left: 22px; }
.t4 { margin-left: 9px; }
.t5 { margin-left: 9px; }
.clock { display: flex; flex-direction: column; align-items: flex-end; margin-left: 20px; margin-top: -2px; }
.badge { width: 20px; height: 20px; border-radius: 50%; background: #4cc2ff; color: #10202c; font-size: 12px; line-height: 20px; text-align: center; margin: -1px 0 0 9px; }
</style>
